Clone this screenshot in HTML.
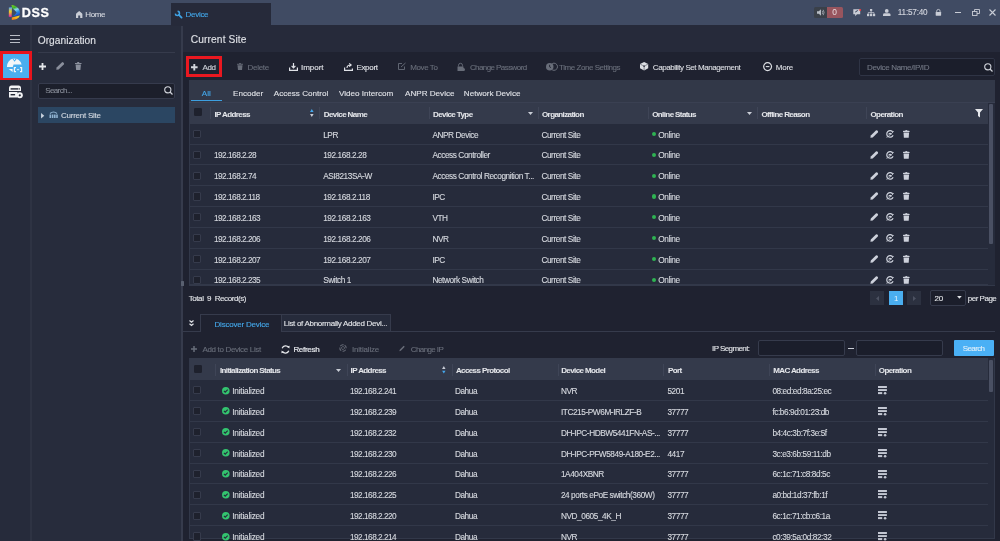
<!DOCTYPE html>
<html><head><meta charset="utf-8">
<style>
*{margin:0;padding:0;box-sizing:border-box}
html,body{width:1000px;height:541px;overflow:hidden;background:#1f2230;font-family:"Liberation Sans",sans-serif;color:#d8dbe2}
.a{position:absolute}
.t{position:absolute;white-space:nowrap;font-size:8px;line-height:10px;color:#d9dce3;-webkit-text-stroke:0.12px currentColor}
.b{font-weight:bold}
svg{position:absolute;overflow:visible}
#top{left:0;top:0;width:1000px;height:25.4px;background:#404b63}
#lbar{left:0;top:25.4px;width:30px;height:516px;background:#262b3b}
#ldiv{left:30px;top:25.4px;width:1.6px;height:516px;background:#2e3343}
#org{left:31.6px;top:25.4px;width:150px;height:516px;background:#272c3c}
#mdiv{left:181.4px;top:25.4px;width:1.8px;height:516px;background:#363b4c}
#mainhead{left:183.2px;top:25.4px;width:817px;height:27px;background:#262a3a}
.hl{position:absolute;height:1px;background:#353a4b}
.vl{position:absolute;width:1px;background:#3f4557}
.cb{position:absolute;width:8.2px;height:8.2px;background:#1e212d;border:0.9px solid #363b4c;border-radius:1px}
.row{position:absolute;height:20.83px;background:#262b3b;border-bottom:1px solid #323849}
.th{font-weight:bold;letter-spacing:-0.6px;color:#e4e6ea;-webkit-text-stroke:0.05px currentColor}
.td{letter-spacing:-0.42px;color:#d6d9df;font-size:8.25px;margin-left:-0.6px;margin-top:0.8px}
.dg{letter-spacing:-0.5px}
.dot{position:absolute;width:4.2px;height:4.2px;border-radius:50%;background:#2fb352}
.gray{color:#7d8290}
</style></head><body><div id="wrap" style="position:absolute;left:0;top:0;width:1000px;height:541px;overflow:hidden;will-change:transform">
<div id="top" class="a"></div>
<div id="lbar" class="a"></div>
<div id="ldiv" class="a"></div>
<div id="org" class="a"></div>
<div id="mdiv" class="a"></div>
<div id="mainhead" class="a"></div>

<!-- ===== TOP BAR ===== -->
<svg style="left:8px;top:4px" width="13" height="17" viewBox="0 0 13 17">
  <defs>
    <linearGradient id="lg1" x1="0" y1="0" x2="0.3" y2="1">
      <stop offset="0" stop-color="#7ee21c"/><stop offset="0.3" stop-color="#3fb02a"/><stop offset="0.5" stop-color="#8ad8f0"/><stop offset="0.75" stop-color="#2a8ae0"/><stop offset="1" stop-color="#1a50d0"/>
    </linearGradient>
    <linearGradient id="lg2" x1="1" y1="0" x2="0" y2="1">
      <stop offset="0" stop-color="#e8e030"/><stop offset="0.5" stop-color="#f8b020"/><stop offset="1" stop-color="#f86a10"/>
    </linearGradient>
    <linearGradient id="lg3" x1="0" y1="0" x2="0" y2="1">
      <stop offset="0" stop-color="#5aa8f5"/><stop offset="0.45" stop-color="#f0d020"/><stop offset="1" stop-color="#e020a8"/>
    </linearGradient>
  </defs>
  <path d="M3.5 1 C8 1.5 12 4.5 12 8.5 C12 9.8 11.7 10.6 11.2 11.2 L4 12.6 Q7.5 11 8.6 8.6 Q7 6 4.2 4.3 Z" fill="url(#lg1)"/>
  <path d="M3.8 13.4 L11.8 11.6 C11 14.5 8 15.8 3.8 16 Z" fill="url(#lg2)"/>
  <path d="M0.9 3.5 L4 3.3 L3.6 13 L0.8 12.8 Z" fill="url(#lg3)"/>
</svg>
<div class="t b" style="left:21.8px;top:7.1px;font-size:12.6px;line-height:12px;color:#fff;letter-spacing:0.65px;-webkit-text-stroke:0.3px #fff">DSS</div>

<svg style="left:75.8px;top:11px" width="6.4" height="7" viewBox="0 0 6.4 7"><path d="M0 7 V3.2 Q0 2.6 0.5 2.2 L3.2 0 L5.9 2.2 Q6.4 2.6 6.4 3.2 V7 H4.2 V4.6 H2.2 V7 Z" fill="#c9cdd6"/></svg>
<div class="t" style="left:85.3px;top:10px;color:#d3d6de;letter-spacing:-0.4px">Home</div>

<div class="a" style="left:171px;top:2.7px;width:99.8px;height:23px;background:#262a3a"></div>
<svg style="left:174.3px;top:10px" width="9" height="9" viewBox="0 0 9 9"><path d="M3.6 1.3 A2.1 2.1 0 1 1 1.3 3.6" stroke="#3fa3e6" stroke-width="1.5" fill="none"/><path d="M4.9 4.9 L7.6 7.6" stroke="#3fa3e6" stroke-width="1.8" stroke-linecap="round"/></svg>
<div class="t" style="left:185.6px;top:10.1px;color:#42a6e8;letter-spacing:-0.3px">Device</div>

<!-- alarm box -->
<div class="a" style="left:814.4px;top:6.8px;width:12.4px;height:11.3px;background:#3a4049;border-radius:1.5px 0 0 1.5px"></div>
<svg style="left:816.5px;top:8.8px" width="8" height="7" viewBox="0 0 8 7"><path d="M0 2.2 H1.8 L4 0.2 V6.8 L1.8 4.8 H0 Z" fill="#b7bcc4"/><path d="M5.2 1.8 Q6.3 3.5 5.2 5.2 M6.2 0.8 Q8 3.5 6.2 6.2" stroke="#b7bcc4" stroke-width="0.7" fill="none"/></svg>
<div class="a" style="left:826.8px;top:6.8px;width:16.7px;height:11.1px;background:#98555e;border-radius:0 1.5px 1.5px 0"></div>
<div class="t" style="left:832.2px;top:7.4px;color:#eadcdf;font-size:8.4px;-webkit-text-stroke:0">0</div>

<svg style="left:853px;top:9px" width="8" height="7.5" viewBox="0 0 8 7.5"><path d="M0.3 0.3 H7.2 V5.2 H4 L2.2 7.2 V5.2 H0.3 Z" fill="#c9cdd6"/><path d="M2 3.6 L2.3 2.6 L4.6 0.9 L5.2 1.5 L3 3.3 Z" fill="#404b63"/><circle cx="7.1" cy="0.9" r="1" fill="#e8383d"/></svg>
<svg style="left:866.8px;top:8.9px" width="8.2" height="7.2" viewBox="0 0 8 7"><rect x="2.9" y="0" width="2.2" height="1.9" fill="#c9cdd6"/><path d="M4 1.9 V3.6 M1.1 5 V3.6 H6.9 V5 M4 3.6 V5" stroke="#c9cdd6" stroke-width="0.8" fill="none"/><rect x="0" y="4.9" width="2.2" height="2.1" fill="#c9cdd6"/><rect x="2.9" y="4.9" width="2.2" height="2.1" fill="#c9cdd6"/><rect x="5.8" y="4.9" width="2.2" height="2.1" fill="#c9cdd6"/></svg>
<svg style="left:882.8px;top:8.9px" width="7.5" height="7" viewBox="0 0 7.5 7"><circle cx="3.75" cy="1.9" r="1.9" fill="#c9cdd6"/><path d="M0 5.4 Q0 4.2 1.8 4.2 H5.7 Q7.5 4.2 7.5 5.4 V7 H0 Z" fill="#c9cdd6"/></svg>
<div class="t" style="left:897.8px;top:8px;color:#d3d6de;letter-spacing:-0.2px;font-size:8.2px">11:57:40</div>
<svg style="left:934.5px;top:9.2px" width="6.8" height="6.8" viewBox="0 0 8 8"><path d="M2 3.5 V2.5 A2 2 0 0 1 6 2.5 V3.5" stroke="#c9cdd6" stroke-width="1" fill="none"/><rect x="0.8" y="3.5" width="6.4" height="4.5" rx="0.5" fill="#c9cdd6"/></svg>
<div class="a" style="left:954.5px;top:12.2px;width:6px;height:1px;background:#c9cdd6"></div>
<svg style="left:971.5px;top:9px" width="8" height="7" viewBox="0 0 8 7"><rect x="0.5" y="2.5" width="4.5" height="4" fill="none" stroke="#c9cdd6" stroke-width="0.9"/><path d="M2.5 2.5 V0.5 H7.5 V4.5 H5" fill="none" stroke="#c9cdd6" stroke-width="0.9"/></svg>
<svg style="left:989px;top:9px" width="7" height="7" viewBox="0 0 7 7"><path d="M0.5 0.5 L6.5 6.5 M6.5 0.5 L0.5 6.5" stroke="#c9cdd6" stroke-width="1.1"/></svg>

<!-- ===== LEFT BAR ===== -->
<div class="a" style="left:10px;top:35.2px;width:9.6px;height:1.2px;background:#b9bdc6"></div>
<div class="a" style="left:10px;top:38.5px;width:9.6px;height:1.2px;background:#b9bdc6"></div>
<div class="a" style="left:10px;top:41.8px;width:9.6px;height:1.2px;background:#b9bdc6"></div>
<div class="a" style="left:0;top:51px;width:31.9px;height:29px;background:#e8141c"></div>
<div class="a" style="left:3px;top:53.8px;width:26.2px;height:24.1px;background:#4aaeef"></div>
<svg style="left:6px;top:58px" width="17" height="15" viewBox="0 0 17 15">
  <path d="M0.9 9 A7.5 8.3 0 0 1 15.6 6.5 L7.6 6.5 L6.7 9 Z" fill="#f4f6f8"/>
  <path d="M6.2 0.4 H11 L8.6 3.8 Z" fill="#4aaeef"/>
  <circle cx="8.5" cy="1.3" r="0.65" fill="#f4f6f8"/>
  <path d="M2.7 11 H6.6 V14 Z" fill="#f4f6f8"/>
  <path d="M10 9.6 H8.4 V13.6 H10 M14 9.6 H15.6 V13.6 H14" stroke="#f4f6f8" stroke-width="1.2" fill="none"/>
  <path d="M10.9 11.7 H13.1" stroke="#f4f6f8" stroke-width="0.9"/>
</svg>
<svg style="left:8px;top:85px" width="15" height="14" viewBox="0 0 15 14">
  <path d="M1 3 Q1 0.5 3.5 0.5 H10.5 Q13 0.5 13 3 V6 H1 Z" fill="#f2f3f5"/>
  <rect x="2.6" y="3.2" width="7.5" height="1.4" fill="#222735"/><rect x="10.6" y="3.2" width="1.2" height="1.4" fill="#222735"/>
  <rect x="1" y="7" width="8.5" height="5.5" fill="#f2f3f5"/>
  <rect x="2.6" y="9" width="4.5" height="1.4" fill="#222735"/>
  <circle cx="11.8" cy="10.3" r="3" fill="#f2f3f5"/><circle cx="11.8" cy="10.3" r="1.1" fill="#222735"/>
</svg>

<!-- ===== ORG PANEL ===== -->
<div class="t" style="left:37.7px;top:34.5px;font-size:10.2px;line-height:12px;color:#dfe1e6;letter-spacing:0.05px">Organization</div>
<div class="hl" style="left:37.5px;top:52px;width:137.5px;background:#363b4c"></div>
<svg style="left:38.8px;top:63px" width="7" height="7" viewBox="0 0 7 7"><path d="M3.5 0 V7 M0 3.5 H7" stroke="#e6e8ec" stroke-width="1.8"/></svg>
<svg style="left:56px;top:62px" width="8.5" height="8" viewBox="0 0 8.5 8"><path d="M0.3 7.8 L0.6 5.6 L5.8 0.4 Q6.5 -0.2 7.3 0.5 L7.8 1 Q8.4 1.7 7.8 2.4 L2.6 7.5 Z" fill="#8a8f9c"/></svg>
<svg style="left:75px;top:62px" width="6.5" height="8" viewBox="0 0 6.5 8"><rect x="0" y="1" width="6.5" height="1" fill="#8a8f9c"/><rect x="2.2" y="0" width="2" height="1" fill="#8a8f9c"/><path d="M0.6 2.5 H5.9 L5.4 8 H1.1 Z" fill="#8a8f9c"/></svg>
<div class="a" style="left:37.6px;top:82.5px;width:137.6px;height:16px;background:#1c1f2b;border:1px solid #363b4d;border-radius:2px"></div>
<div class="t" style="left:45.2px;top:86px;color:#858a95;letter-spacing:-0.6px">Search...</div>
<svg style="left:164px;top:85.6px" width="9" height="9" viewBox="0 0 9 9"><circle cx="3.8" cy="3.8" r="3.1" stroke="#d0d3da" stroke-width="1.1" fill="none"/><path d="M6 6 L8.5 8.5" stroke="#d0d3da" stroke-width="1.3"/></svg>
<div class="a" style="left:37.5px;top:107px;width:137.5px;height:16.2px;background:#2b4662"></div>
<svg style="left:41px;top:112.6px" width="3.3" height="5.4" viewBox="0 0 3 5"><path d="M0 0 L3 2.5 L0 5 Z" fill="#c9d3de"/></svg>
<svg style="left:49px;top:111.3px" width="9" height="7" viewBox="0 0 9 7"><path d="M1 2.5 Q4.5 -0.5 8 2.5" stroke="#8fb2d0" stroke-width="1.1" fill="none"/><rect x="0.5" y="3.5" width="1.6" height="3.5" fill="#8fb2d0"/><rect x="2.8" y="3.5" width="1.6" height="3.5" fill="#8fb2d0"/><rect x="5" y="3.5" width="1.6" height="3.5" fill="#8fb2d0"/><rect x="7.2" y="3.5" width="1.6" height="3.5" fill="#8fb2d0"/></svg>
<div class="t" style="left:61px;top:111px;color:#d3d9e1;letter-spacing:-0.25px">Current Site</div>

<!-- ===== MAIN ===== -->
<div class="t" style="left:190.8px;top:34.3px;font-size:10.2px;line-height:12px;color:#dfe1e6;letter-spacing:0.12px">Current Site</div>
<div class="a" style="left:183.2px;top:52.8px;width:817px;height:489px;background:#1f2230"></div>
<div class="a" style="left:181px;top:281px;width:2.8px;height:5px;background:#596070;border-radius:0.5px"></div>
<div class="a" style="left:186px;top:56.1px;width:35.9px;height:20.9px;border:3.1px solid #ea1820;border-bottom-width:3.3px"></div>
<svg style="left:191px;top:63.5px" width="6.6" height="6.5" viewBox="0 0 6.6 6.5"><path d="M3.3 0 V6.5 M0 3.25 H6.6" stroke="#d3d6dd" stroke-width="1.9"/></svg>
<div class="t" style="left:202.6px;top:63.099999999999994px;color:#cfd2d9;letter-spacing:-0.4px">Add</div>
<svg style="left:237px;top:63.3px" width="6" height="7" viewBox="0 0 6 7"><rect x="0" y="0.8" width="6" height="0.9" fill="#686d79"/><rect x="2" y="0" width="2" height="0.8" fill="#686d79"/><path d="M0.5 2.2 H5.5 L5 7 H1 Z" fill="#686d79"/></svg>
<div class="t" style="left:247.4px;top:63.099999999999994px;color:#686d79;letter-spacing:-0.244px">Delete</div>
<svg style="left:288.6px;top:63.3px" width="9" height="8" viewBox="0 0 9 8"><path d="M4.5 0 V4.5 M2.6 2.8 L4.5 4.8 L6.4 2.8" stroke="#e0e2e7" stroke-width="1.2" fill="none"/><path d="M0.6 4.5 V7.4 H8.4 V4.5" stroke="#e0e2e7" stroke-width="1.2" fill="none"/></svg>
<div class="t" style="left:301.09999999999997px;top:63.099999999999994px;color:#e0e2e7;letter-spacing:-0.056px">Import</div>
<svg style="left:343.5px;top:63.3px" width="9" height="8" viewBox="0 0 9 8"><path d="M3 5 Q3 2 6.5 2 M5.2 0.3 L7.2 2 L5.2 3.7" stroke="#e0e2e7" stroke-width="1.1" fill="none"/><path d="M0.6 4.5 V7.4 H8.4 V5.5" stroke="#e0e2e7" stroke-width="1.2" fill="none"/></svg>
<div class="t" style="left:356.4px;top:63.099999999999994px;color:#e0e2e7;letter-spacing:-0.304px">Export</div>
<svg style="left:398px;top:63.3px" width="8" height="7" viewBox="0 0 8 7"><path d="M4 0.5 H0.5 V6.5 H6.5 V3.5" stroke="#686d79" stroke-width="0.9" fill="none"/><path d="M3 4 L7.5 0" stroke="#686d79" stroke-width="0.9"/></svg>
<div class="t" style="left:410.29999999999995px;top:63.099999999999994px;color:#686d79;letter-spacing:-0.413px">Move To</div>
<svg style="left:456.7px;top:63.3px" width="8" height="8" viewBox="0 0 8 8"><path d="M1.5 3.5 V2.3 A2 2 0 0 1 5.5 2.3 V3.5" stroke="#686d79" stroke-width="0.9" fill="none"/><rect x="0.5" y="3.5" width="6" height="4.5" fill="#686d79"/><circle cx="6.5" cy="6.5" r="1.5" fill="#686d79"/></svg>
<div class="t" style="left:469.9px;top:63.099999999999994px;color:#686d79;letter-spacing:-0.576px">Change Password</div>
<svg style="left:545.9px;top:62.9px" width="10.2" height="7.5" viewBox="0 0 10.2 7.5"><path d="M6.2 0.6 A3.6 3.6 0 1 1 6.2 6.9" stroke="#686d79" stroke-width="1" fill="none"/><circle cx="3.75" cy="3.75" r="3.75" fill="#686d79"/><path d="M3.6 1.8 V3.9 L5 4.6" stroke="#1f2230" stroke-width="0.9" fill="none"/></svg>
<div class="t" style="left:559.1px;top:63.099999999999994px;color:#686d79;letter-spacing:-0.452px">Time Zone Settings</div>
<svg style="left:640px;top:62.3px" width="8.2" height="8.4" viewBox="0 0 8.2 8.4"><path d="M4.1 0 L8.2 2.1 V6.3 L4.1 8.4 L0 6.3 V2.1 Z" fill="#dcdee3"/><path d="M2.6 3.4 H5.6 L4.1 5.4 Z" fill="#1f2230"/><path d="M2.7 3.4 L0.3 2.2 M5.5 3.4 L7.9 2.2 M4.1 5.3 V8.2" stroke="#1f2230" stroke-width="0.5"/></svg>
<div class="t" style="left:652.8px;top:63.099999999999994px;color:#dcdee3;letter-spacing:-0.428px">Capability Set Management</div>
<svg style="left:762.6px;top:62px" width="9.2" height="9.2" viewBox="0 0 9.2 9.2"><circle cx="4.6" cy="4.6" r="3.95" stroke="#dcdee3" stroke-width="1.2" fill="none"/><path d="M2.8 4.6 H6.4" stroke="#dcdee3" stroke-width="1.1"/></svg>
<div class="t" style="left:775.8px;top:63.099999999999994px;color:#dcdee3;letter-spacing:-0.247px">More</div>
<div class="a" style="left:859px;top:58px;width:135.5px;height:17.5px;background:#1b1e2b;border:1px solid #2f3445;border-radius:2px"></div>
<div class="t" style="left:867px;top:62.699999999999996px;color:#727784;letter-spacing:-0.35px">Device Name/IP/ID</div>
<svg style="left:983.5px;top:62.5px" width="9" height="9" viewBox="0 0 9 9"><circle cx="3.8" cy="3.8" r="3.1" stroke="#d0d3da" stroke-width="1.1" fill="none"/><path d="M6 6 L8.5 8.5" stroke="#d0d3da" stroke-width="1.3"/></svg>
<div class="a" style="left:188.8px;top:79.5px;width:806.2px;height:206.5px;background:#262b3b;border:1.2px solid #323849;border-top:none"></div>
<div class="a" style="left:188.8px;top:79.5px;width:806.2px;height:23.5px;background:#323848;border-bottom:1px solid #3a4052"></div>
<div class="t" style="left:201.8px;top:88.8px;color:#44a8ea;letter-spacing:0px;font-size:8.1px">All</div>
<div class="t" style="left:233px;top:88.8px;color:#dfe1e6;letter-spacing:0px;font-size:8.1px">Encoder</div>
<div class="t" style="left:273.8px;top:88.8px;color:#dfe1e6;letter-spacing:0px;font-size:8.1px">Access Control</div>
<div class="t" style="left:339px;top:88.8px;color:#dfe1e6;letter-spacing:0px;font-size:8.1px">Video Intercom</div>
<div class="t" style="left:405px;top:88.8px;color:#dfe1e6;letter-spacing:0px;font-size:8.1px">ANPR Device</div>
<div class="t" style="left:463.8px;top:88.8px;color:#dfe1e6;letter-spacing:0px;font-size:8.1px">Network Device</div>
<div class="a" style="left:190.6px;top:99.6px;width:31.5px;height:1.7px;background:#3d9fe0"></div>
<div class="a" style="left:189.6px;top:103px;width:798.4px;height:20.8px;background:#343a4b"></div>
<div class="cb" style="left:193.6px;top:108.3px;border-color:#1e212d"></div>
<div class="vl" style="left:210.4px;top:107px;height:12.2px"></div>
<div class="vl" style="left:319.2px;top:107px;height:12.2px"></div>
<div class="vl" style="left:428.8px;top:107px;height:12.2px"></div>
<div class="vl" style="left:538.2px;top:107px;height:12.2px"></div>
<div class="vl" style="left:648px;top:107px;height:12.2px"></div>
<div class="vl" style="left:757px;top:107px;height:12.2px"></div>
<div class="vl" style="left:866.3px;top:107px;height:12.2px"></div>
<div class="t th" style="left:214.5px;top:109.89999999999999px">IP Address</div>
<div class="t th" style="left:323.8px;top:109.89999999999999px">Device Name</div>
<div class="t th" style="left:433px;top:109.89999999999999px">Device Type</div>
<div class="t th" style="left:542px;top:109.89999999999999px">Organization</div>
<div class="t th" style="left:652.2px;top:109.89999999999999px">Online Status</div>
<div class="t th" style="left:761.4px;top:109.89999999999999px">Offline Reason</div>
<div class="t th" style="left:870.5px;top:109.89999999999999px">Operation</div>
<svg style="left:309.7px;top:109px" width="3.6" height="8" viewBox="0 0 3.6 8"><path d="M0 3.1 L1.8 0 L3.6 3.1 Z" fill="#44a8ee"/><path d="M0 4.9 L1.8 8 L3.6 4.9 Z" fill="#c8ccd6"/></svg>
<svg style="left:527.8px;top:112.3px" width="5" height="3" viewBox="0 0 5 3"><path d="M0 0 H5 L2.5 3 Z" fill="#c9cdd6"/></svg>
<svg style="left:746.8px;top:112.3px" width="5" height="3" viewBox="0 0 5 3"><path d="M0 0 H5 L2.5 3 Z" fill="#c9cdd6"/></svg>
<svg style="left:975.2px;top:109px" width="8" height="8.5" viewBox="0 0 8 8.5"><path d="M0 0 H8 L5 3.5 V8.5 L3 7 V3.5 Z" fill="#e6e8ec"/></svg>
<div class="a" style="left:988px;top:103px;width:6.8px;height:182px;background:#262b3b"></div>
<div class="a" style="left:988.9px;top:103.9px;width:4.2px;height:139.8px;background:#4a5063;border-radius:1px"></div>
<div class="a" style="left:189.6px;top:123.80px;width:798.4px;height:20.83px;background:#262b3b;border-bottom:1.2px solid #323849"></div>
<div class="cb" style="left:193.3px;top:129.90px"></div>
<div class="t td" style="left:323.8px;top:129.80px">LPR</div>
<div class="t td" style="left:433px;top:129.80px">ANPR Device</div>
<div class="t td" style="left:542px;top:129.80px">Current Site</div>
<div class="dot" style="left:651.6px;top:131.90px"></div>
<div class="t td" style="left:658.9px;top:129.80px">Online</div>
<svg style="left:869.6px;top:129.90px" width="8.5" height="8" viewBox="0 0 8.5 8"><path d="M0.4 7.7 L0.8 5.6 L5.9 0.5 Q6.6 -0.1 7.3 0.6 L7.8 1.1 Q8.4 1.8 7.8 2.5 L2.7 7.4 Z" fill="#cdd1db"/></svg>
<svg style="left:885.9px;top:129.90px" width="8.2" height="8" viewBox="0 0 8.2 8"><path d="M6.9 2.2 A3.3 3.3 0 1 0 7.1 5.2" stroke="#cdd1db" stroke-width="1.2" fill="none"/><path d="M2.3 4.6 A1.8 1.8 0 1 1 5.9 4.4 Z" fill="#cdd1db"/><path d="M0.3 7.3 Q3 7 7.8 1" stroke="#cdd1db" stroke-width="0.7" fill="none"/></svg>
<svg style="left:902.9px;top:129.90px" width="6.6" height="8" viewBox="0 0 6.6 8"><path d="M0 1.3 Q0 0.8 0.6 0.8 H2.1 Q2.3 0 3.3 0 Q4.3 0 4.5 0.8 H6 Q6.6 0.8 6.6 1.3 V1.9 H0 Z" fill="#cdd1db"/><path d="M0.5 2.5 H6.1 L5.7 7.8 H0.9 Z" fill="#cdd1db"/></svg>
<div class="a" style="left:189.6px;top:144.63px;width:798.4px;height:20.83px;background:#262b3b;border-bottom:1.2px solid #323849"></div>
<div class="cb" style="left:193.3px;top:150.73px"></div>
<div class="t td dg" style="left:214.5px;top:150.63px">192.168.2.28</div>
<div class="t td" style="left:323.8px;top:150.63px">192.168.2.28</div>
<div class="t td" style="left:433px;top:150.63px">Access Controller</div>
<div class="t td" style="left:542px;top:150.63px">Current Site</div>
<div class="dot" style="left:651.6px;top:152.73px"></div>
<div class="t td" style="left:658.9px;top:150.63px">Online</div>
<svg style="left:869.6px;top:150.73px" width="8.5" height="8" viewBox="0 0 8.5 8"><path d="M0.4 7.7 L0.8 5.6 L5.9 0.5 Q6.6 -0.1 7.3 0.6 L7.8 1.1 Q8.4 1.8 7.8 2.5 L2.7 7.4 Z" fill="#cdd1db"/></svg>
<svg style="left:885.9px;top:150.73px" width="8.2" height="8" viewBox="0 0 8.2 8"><path d="M6.9 2.2 A3.3 3.3 0 1 0 7.1 5.2" stroke="#cdd1db" stroke-width="1.2" fill="none"/><path d="M2.3 4.6 A1.8 1.8 0 1 1 5.9 4.4 Z" fill="#cdd1db"/><path d="M0.3 7.3 Q3 7 7.8 1" stroke="#cdd1db" stroke-width="0.7" fill="none"/></svg>
<svg style="left:902.9px;top:150.73px" width="6.6" height="8" viewBox="0 0 6.6 8"><path d="M0 1.3 Q0 0.8 0.6 0.8 H2.1 Q2.3 0 3.3 0 Q4.3 0 4.5 0.8 H6 Q6.6 0.8 6.6 1.3 V1.9 H0 Z" fill="#cdd1db"/><path d="M0.5 2.5 H6.1 L5.7 7.8 H0.9 Z" fill="#cdd1db"/></svg>
<div class="a" style="left:189.6px;top:165.46px;width:798.4px;height:20.83px;background:#262b3b;border-bottom:1.2px solid #323849"></div>
<div class="cb" style="left:193.3px;top:171.56px"></div>
<div class="t td dg" style="left:214.5px;top:171.46px">192.168.2.74</div>
<div class="t td" style="left:323.8px;top:171.46px">ASI8213SA-W</div>
<div class="t td" style="left:433px;top:171.46px">Access Control Recognition T...</div>
<div class="t td" style="left:542px;top:171.46px">Current Site</div>
<div class="dot" style="left:651.6px;top:173.56px"></div>
<div class="t td" style="left:658.9px;top:171.46px">Online</div>
<svg style="left:869.6px;top:171.56px" width="8.5" height="8" viewBox="0 0 8.5 8"><path d="M0.4 7.7 L0.8 5.6 L5.9 0.5 Q6.6 -0.1 7.3 0.6 L7.8 1.1 Q8.4 1.8 7.8 2.5 L2.7 7.4 Z" fill="#cdd1db"/></svg>
<svg style="left:885.9px;top:171.56px" width="8.2" height="8" viewBox="0 0 8.2 8"><path d="M6.9 2.2 A3.3 3.3 0 1 0 7.1 5.2" stroke="#cdd1db" stroke-width="1.2" fill="none"/><path d="M2.3 4.6 A1.8 1.8 0 1 1 5.9 4.4 Z" fill="#cdd1db"/><path d="M0.3 7.3 Q3 7 7.8 1" stroke="#cdd1db" stroke-width="0.7" fill="none"/></svg>
<svg style="left:902.9px;top:171.56px" width="6.6" height="8" viewBox="0 0 6.6 8"><path d="M0 1.3 Q0 0.8 0.6 0.8 H2.1 Q2.3 0 3.3 0 Q4.3 0 4.5 0.8 H6 Q6.6 0.8 6.6 1.3 V1.9 H0 Z" fill="#cdd1db"/><path d="M0.5 2.5 H6.1 L5.7 7.8 H0.9 Z" fill="#cdd1db"/></svg>
<div class="a" style="left:189.6px;top:186.29px;width:798.4px;height:20.83px;background:#262b3b;border-bottom:1.2px solid #323849"></div>
<div class="cb" style="left:193.3px;top:192.39px"></div>
<div class="t td dg" style="left:214.5px;top:192.29px">192.168.2.118</div>
<div class="t td" style="left:323.8px;top:192.29px">192.168.2.118</div>
<div class="t td" style="left:433px;top:192.29px">IPC</div>
<div class="t td" style="left:542px;top:192.29px">Current Site</div>
<div class="dot" style="left:651.6px;top:194.39px"></div>
<div class="t td" style="left:658.9px;top:192.29px">Online</div>
<svg style="left:869.6px;top:192.39px" width="8.5" height="8" viewBox="0 0 8.5 8"><path d="M0.4 7.7 L0.8 5.6 L5.9 0.5 Q6.6 -0.1 7.3 0.6 L7.8 1.1 Q8.4 1.8 7.8 2.5 L2.7 7.4 Z" fill="#cdd1db"/></svg>
<svg style="left:885.9px;top:192.39px" width="8.2" height="8" viewBox="0 0 8.2 8"><path d="M6.9 2.2 A3.3 3.3 0 1 0 7.1 5.2" stroke="#cdd1db" stroke-width="1.2" fill="none"/><path d="M2.3 4.6 A1.8 1.8 0 1 1 5.9 4.4 Z" fill="#cdd1db"/><path d="M0.3 7.3 Q3 7 7.8 1" stroke="#cdd1db" stroke-width="0.7" fill="none"/></svg>
<svg style="left:902.9px;top:192.39px" width="6.6" height="8" viewBox="0 0 6.6 8"><path d="M0 1.3 Q0 0.8 0.6 0.8 H2.1 Q2.3 0 3.3 0 Q4.3 0 4.5 0.8 H6 Q6.6 0.8 6.6 1.3 V1.9 H0 Z" fill="#cdd1db"/><path d="M0.5 2.5 H6.1 L5.7 7.8 H0.9 Z" fill="#cdd1db"/></svg>
<div class="a" style="left:189.6px;top:207.12px;width:798.4px;height:20.83px;background:#262b3b;border-bottom:1.2px solid #323849"></div>
<div class="cb" style="left:193.3px;top:213.22px"></div>
<div class="t td dg" style="left:214.5px;top:213.12px">192.168.2.163</div>
<div class="t td" style="left:323.8px;top:213.12px">192.168.2.163</div>
<div class="t td" style="left:433px;top:213.12px">VTH</div>
<div class="t td" style="left:542px;top:213.12px">Current Site</div>
<div class="dot" style="left:651.6px;top:215.22px"></div>
<div class="t td" style="left:658.9px;top:213.12px">Online</div>
<svg style="left:869.6px;top:213.22px" width="8.5" height="8" viewBox="0 0 8.5 8"><path d="M0.4 7.7 L0.8 5.6 L5.9 0.5 Q6.6 -0.1 7.3 0.6 L7.8 1.1 Q8.4 1.8 7.8 2.5 L2.7 7.4 Z" fill="#cdd1db"/></svg>
<svg style="left:885.9px;top:213.22px" width="8.2" height="8" viewBox="0 0 8.2 8"><path d="M6.9 2.2 A3.3 3.3 0 1 0 7.1 5.2" stroke="#cdd1db" stroke-width="1.2" fill="none"/><path d="M2.3 4.6 A1.8 1.8 0 1 1 5.9 4.4 Z" fill="#cdd1db"/><path d="M0.3 7.3 Q3 7 7.8 1" stroke="#cdd1db" stroke-width="0.7" fill="none"/></svg>
<svg style="left:902.9px;top:213.22px" width="6.6" height="8" viewBox="0 0 6.6 8"><path d="M0 1.3 Q0 0.8 0.6 0.8 H2.1 Q2.3 0 3.3 0 Q4.3 0 4.5 0.8 H6 Q6.6 0.8 6.6 1.3 V1.9 H0 Z" fill="#cdd1db"/><path d="M0.5 2.5 H6.1 L5.7 7.8 H0.9 Z" fill="#cdd1db"/></svg>
<div class="a" style="left:189.6px;top:227.95px;width:798.4px;height:20.83px;background:#262b3b;border-bottom:1.2px solid #323849"></div>
<div class="cb" style="left:193.3px;top:234.05px"></div>
<div class="t td dg" style="left:214.5px;top:233.95px">192.168.2.206</div>
<div class="t td" style="left:323.8px;top:233.95px">192.168.2.206</div>
<div class="t td" style="left:433px;top:233.95px">NVR</div>
<div class="t td" style="left:542px;top:233.95px">Current Site</div>
<div class="dot" style="left:651.6px;top:236.05px"></div>
<div class="t td" style="left:658.9px;top:233.95px">Online</div>
<svg style="left:869.6px;top:234.05px" width="8.5" height="8" viewBox="0 0 8.5 8"><path d="M0.4 7.7 L0.8 5.6 L5.9 0.5 Q6.6 -0.1 7.3 0.6 L7.8 1.1 Q8.4 1.8 7.8 2.5 L2.7 7.4 Z" fill="#cdd1db"/></svg>
<svg style="left:885.9px;top:234.05px" width="8.2" height="8" viewBox="0 0 8.2 8"><path d="M6.9 2.2 A3.3 3.3 0 1 0 7.1 5.2" stroke="#cdd1db" stroke-width="1.2" fill="none"/><path d="M2.3 4.6 A1.8 1.8 0 1 1 5.9 4.4 Z" fill="#cdd1db"/><path d="M0.3 7.3 Q3 7 7.8 1" stroke="#cdd1db" stroke-width="0.7" fill="none"/></svg>
<svg style="left:902.9px;top:234.05px" width="6.6" height="8" viewBox="0 0 6.6 8"><path d="M0 1.3 Q0 0.8 0.6 0.8 H2.1 Q2.3 0 3.3 0 Q4.3 0 4.5 0.8 H6 Q6.6 0.8 6.6 1.3 V1.9 H0 Z" fill="#cdd1db"/><path d="M0.5 2.5 H6.1 L5.7 7.8 H0.9 Z" fill="#cdd1db"/></svg>
<div class="a" style="left:189.6px;top:248.78px;width:798.4px;height:20.83px;background:#262b3b;border-bottom:1.2px solid #323849"></div>
<div class="cb" style="left:193.3px;top:254.88px"></div>
<div class="t td dg" style="left:214.5px;top:254.78px">192.168.2.207</div>
<div class="t td" style="left:323.8px;top:254.78px">192.168.2.207</div>
<div class="t td" style="left:433px;top:254.78px">IPC</div>
<div class="t td" style="left:542px;top:254.78px">Current Site</div>
<div class="dot" style="left:651.6px;top:256.88px"></div>
<div class="t td" style="left:658.9px;top:254.78px">Online</div>
<svg style="left:869.6px;top:254.88px" width="8.5" height="8" viewBox="0 0 8.5 8"><path d="M0.4 7.7 L0.8 5.6 L5.9 0.5 Q6.6 -0.1 7.3 0.6 L7.8 1.1 Q8.4 1.8 7.8 2.5 L2.7 7.4 Z" fill="#cdd1db"/></svg>
<svg style="left:885.9px;top:254.88px" width="8.2" height="8" viewBox="0 0 8.2 8"><path d="M6.9 2.2 A3.3 3.3 0 1 0 7.1 5.2" stroke="#cdd1db" stroke-width="1.2" fill="none"/><path d="M2.3 4.6 A1.8 1.8 0 1 1 5.9 4.4 Z" fill="#cdd1db"/><path d="M0.3 7.3 Q3 7 7.8 1" stroke="#cdd1db" stroke-width="0.7" fill="none"/></svg>
<svg style="left:902.9px;top:254.88px" width="6.6" height="8" viewBox="0 0 6.6 8"><path d="M0 1.3 Q0 0.8 0.6 0.8 H2.1 Q2.3 0 3.3 0 Q4.3 0 4.5 0.8 H6 Q6.6 0.8 6.6 1.3 V1.9 H0 Z" fill="#cdd1db"/><path d="M0.5 2.5 H6.1 L5.7 7.8 H0.9 Z" fill="#cdd1db"/></svg>
<div class="a" style="left:189.6px;top:269.61px;width:798.4px;height:15.89px;background:#262b3b;border-bottom:1.2px solid #323849"></div>
<div class="cb" style="left:193.3px;top:275.71px"></div>
<div class="t td dg" style="left:214.5px;top:275.61px">192.168.2.235</div>
<div class="t td" style="left:323.8px;top:275.61px">Switch 1</div>
<div class="t td" style="left:433px;top:275.61px">Network Switch</div>
<div class="t td" style="left:542px;top:275.61px">Current Site</div>
<div class="dot" style="left:651.6px;top:277.71px"></div>
<div class="t td" style="left:658.9px;top:275.61px">Online</div>
<svg style="left:869.6px;top:275.71px" width="8.5" height="8" viewBox="0 0 8.5 8"><path d="M0.4 7.7 L0.8 5.6 L5.9 0.5 Q6.6 -0.1 7.3 0.6 L7.8 1.1 Q8.4 1.8 7.8 2.5 L2.7 7.4 Z" fill="#cdd1db"/></svg>
<svg style="left:885.9px;top:275.71px" width="8.2" height="8" viewBox="0 0 8.2 8"><path d="M6.9 2.2 A3.3 3.3 0 1 0 7.1 5.2" stroke="#cdd1db" stroke-width="1.2" fill="none"/><path d="M2.3 4.6 A1.8 1.8 0 1 1 5.9 4.4 Z" fill="#cdd1db"/><path d="M0.3 7.3 Q3 7 7.8 1" stroke="#cdd1db" stroke-width="0.7" fill="none"/></svg>
<svg style="left:902.9px;top:275.71px" width="6.6" height="8" viewBox="0 0 6.6 8"><path d="M0 1.3 Q0 0.8 0.6 0.8 H2.1 Q2.3 0 3.3 0 Q4.3 0 4.5 0.8 H6 Q6.6 0.8 6.6 1.3 V1.9 H0 Z" fill="#cdd1db"/><path d="M0.5 2.5 H6.1 L5.7 7.8 H0.9 Z" fill="#cdd1db"/></svg>
<div class="t" style="left:188.7px;top:293.5px;color:#e2e4e8;letter-spacing:-0.42px">Total&nbsp; 9&nbsp; Record(s)</div>
<div class="a" style="left:870px;top:291px;width:14px;height:14px;background:#2c3140"></div>
<svg style="left:875.5px;top:295.5px" width="3" height="5" viewBox="0 0 3 5"><path d="M3 0 L0 2.5 L3 5 Z" fill="#4d5262"/></svg>
<div class="a" style="left:889px;top:291px;width:14px;height:14px;background:#4aaeef"></div>
<div class="t" style="left:894px;top:293.8px;color:#e6f2fb;font-size:7.8px;-webkit-text-stroke:0">1</div>
<div class="a" style="left:907px;top:291px;width:14px;height:14px;background:#2c3140"></div>
<svg style="left:912.5px;top:295.5px" width="3" height="5" viewBox="0 0 3 5"><path d="M0 0 L3 2.5 L0 5 Z" fill="#4d5262"/></svg>
<div class="a" style="left:930px;top:289.5px;width:35.5px;height:16px;background:#1b1e2b;border:1px solid #363b4c;border-radius:2px"></div>
<div class="t" style="left:934.5px;top:293.8px;color:#e2e4e8;letter-spacing:-0.2px">20</div>
<svg style="left:957.2px;top:296.4px" width="4.8" height="2.8" viewBox="0 0 5 3"><path d="M0 0 H5 L2.5 3 Z" fill="#e2e4e8"/></svg>
<div class="t" style="left:967.7px;top:294.2px;color:#e2e4e8;letter-spacing:-0.48px">per Page</div>
<div class="hl" style="left:183.4px;top:330.6px;width:811.6px;background:#363b4c"></div>
<svg style="left:189.4px;top:320px" width="5" height="6.5" viewBox="0 0 5 6.5"><path d="M0.5 0.5 L2.5 2.2 L4.5 0.5 M0.5 3.8 L2.5 5.5 L4.5 3.8" stroke="#e0e3e8" stroke-width="1.2" fill="none"/></svg>
<div class="a" style="left:200.2px;top:314.3px;width:81px;height:17.3px;background:#1f2230;border-top:1px solid #363b4c;border-left:1px solid #363b4c"></div>
<div class="t" style="left:214.5px;top:319.6px;color:#44a8ea;letter-spacing:-0.2px">Discover Device</div>
<div class="a" style="left:281px;top:314.3px;width:110px;height:16.6px;background:#262b3b;border:1px solid #363b4c;border-bottom:none"></div>
<div class="t" style="left:283.8px;top:319.2px;color:#e2e4e8;letter-spacing:-0.3px">List of Abnormally Added Devi...</div>
<svg style="left:191px;top:345.5px" width="6" height="6" viewBox="0 0 6 6"><path d="M3 0 V6 M0 3 H6" stroke="#686d79" stroke-width="1.5"/></svg>
<div class="t" style="left:202.4px;top:344.6px;color:#686d79;letter-spacing:-0.33px">Add to Device List</div>
<svg style="left:280.8px;top:344.5px" width="9" height="9" viewBox="0 0 9 9"><path d="M7.6 2.6 A3.6 3.6 0 0 0 1.2 3.2 M1.4 6.4 A3.6 3.6 0 0 0 7.8 5.8" stroke="#e6e8ec" stroke-width="1.3" fill="none"/><path d="M6.2 1.6 L8.4 3.6 L8.6 0.8 Z M2.8 7.4 L0.6 5.4 L0.4 8.2 Z" fill="#e6e8ec"/></svg>
<div class="t" style="left:293.4px;top:344.6px;color:#e2e4e9;letter-spacing:-0.3px;-webkit-text-stroke:0.22px currentColor">Refresh</div>
<svg style="left:339.4px;top:344px" width="8" height="8" viewBox="0 0 8 8"><circle cx="4" cy="4" r="3.2" stroke="#686d79" stroke-width="1" fill="none" stroke-dasharray="3.5 1.5" transform="rotate(-60 4 4)"/><path d="M4 2.2 L5.8 4 L4 5.8 L2.2 4 Z" fill="none" stroke="#686d79" stroke-width="0.8"/></svg>
<div class="t" style="left:351.9px;top:344.6px;color:#686d79;letter-spacing:-0.17px">Initialize</div>
<svg style="left:399px;top:345px" width="6.5" height="6.5" viewBox="0 0 7 7"><path d="M0.3 6.7 L0.8 5 L5 0.8 L6.2 2 L2 6.2 Z" fill="#686d79"/></svg>
<div class="t" style="left:410.8px;top:344.6px;color:#686d79;letter-spacing:-0.6px">Change IP</div>
<div class="t" style="left:712px;top:344.6px;color:#e2e4e8;letter-spacing:-0.58px;margin-top:-0.8px">IP Segment:</div>
<div class="a" style="left:758px;top:340px;width:86.8px;height:16.4px;background:#1b1e2b;border:1px solid #363b4c;border-radius:2px"></div>
<div class="a" style="left:848px;top:348px;width:5.5px;height:1px;background:#c9cdd6"></div>
<div class="a" style="left:856px;top:340px;width:86.8px;height:16.4px;background:#1b1e2b;border:1px solid #363b4c;border-radius:2px"></div>
<div class="a" style="left:953.6px;top:340px;width:40.6px;height:16.3px;background:#4ab0f5;border-radius:1px"></div>
<div class="t" style="left:962.8px;top:344.3px;color:#dceefa;letter-spacing:-0.62px">Search</div>
<div class="a" style="left:188.8px;top:358.2px;width:806.2px;height:181.2px;background:#262b3b;border:1.2px solid #323849;border-top:none"></div>
<div class="a" style="left:189.6px;top:358.2px;width:798.4px;height:21.5px;background:#343a4b"></div>
<div class="cb" style="left:193.6px;top:364.5px;border-color:#1e212d"></div>
<div class="vl" style="left:215.2px;top:364px;height:12px"></div>
<div class="vl" style="left:346.5px;top:364px;height:12px"></div>
<div class="vl" style="left:452.3px;top:364px;height:12px"></div>
<div class="vl" style="left:557.5px;top:364px;height:12px"></div>
<div class="vl" style="left:663px;top:364px;height:12px"></div>
<div class="vl" style="left:768.6px;top:364px;height:12px"></div>
<div class="vl" style="left:874.6px;top:364px;height:12px"></div>
<div class="t th" style="left:219.9px;top:366.1px">Initialization Status</div>
<div class="t th" style="left:350.6px;top:366.1px">IP Address</div>
<div class="t th" style="left:455.9px;top:366.1px">Access Protocol</div>
<div class="t th" style="left:561.2px;top:366.1px">Device Model</div>
<div class="t th" style="left:668px;top:366.1px">Port</div>
<div class="t th" style="left:773.2px;top:366.1px">MAC Address</div>
<div class="t th" style="left:878.8px;top:366.1px">Operation</div>
<svg style="left:335.5px;top:368.5px" width="5" height="3" viewBox="0 0 5 3"><path d="M0 0 H5 L2.5 3 Z" fill="#c9cdd6"/></svg>
<svg style="left:441.8px;top:365.6px" width="3.6" height="7.6" viewBox="0 0 3.6 8"><path d="M0 3.1 L1.8 0 L3.6 3.1 Z" fill="#c8ccd6"/><path d="M0 4.9 L1.8 8 L3.6 4.9 Z" fill="#44a8ee"/></svg>
<div class="a" style="left:988px;top:358.2px;width:5.8px;height:180px;background:#262b3b"></div>
<div class="a" style="left:988.7px;top:360px;width:4.2px;height:31.6px;background:#4a5063;border-radius:1px"></div>
<div class="a" style="left:189.6px;top:380.10px;width:798.4px;height:20.87px;background:#262b3b;border-bottom:1.2px solid #323849;"></div>
<div class="cb" style="left:193.3px;top:386.30px"></div>
<svg style="left:222px;top:386.60px" width="7.6" height="7.6" viewBox="0 0 8 8"><circle cx="4" cy="4" r="4" fill="#33c46f"/><path d="M2 4.1 L3.4 5.5 L6 2.8" stroke="#262b3b" stroke-width="1.2" fill="none"/></svg>
<div class="t td" style="left:232.8px;top:386.20px;letter-spacing:-0.2px">Initialized</div>
<div class="t td dg" style="left:350.5px;top:386.20px">192.168.2.241</div>
<div class="t td" style="left:455.5px;top:386.20px">Dahua</div>
<div class="t td" style="left:561.5px;top:386.20px">NVR</div>
<div class="t td" style="left:668px;top:386.20px">5201</div>
<div class="t td" style="left:773px;top:386.20px">08:ed:ed:8a:25:ec</div>
<svg style="left:878px;top:386.10px" width="9" height="9" viewBox="0 0 9 9"><rect x="0" y="0" width="8.9" height="2" fill="#c3c7d2"/><rect x="0" y="3.1" width="8.9" height="1.9" fill="#c3c7d2"/><rect x="0" y="6.1" width="4.2" height="2" fill="#c3c7d2"/><circle cx="7.1" cy="7.2" r="1.3" fill="#c3c7d2"/></svg>
<div class="a" style="left:189.6px;top:400.97px;width:798.4px;height:20.87px;background:#262b3b;border-bottom:1.2px solid #323849;"></div>
<div class="cb" style="left:193.3px;top:407.17px"></div>
<svg style="left:222px;top:407.47px" width="7.6" height="7.6" viewBox="0 0 8 8"><circle cx="4" cy="4" r="4" fill="#33c46f"/><path d="M2 4.1 L3.4 5.5 L6 2.8" stroke="#262b3b" stroke-width="1.2" fill="none"/></svg>
<div class="t td" style="left:232.8px;top:407.07px;letter-spacing:-0.2px">Initialized</div>
<div class="t td dg" style="left:350.5px;top:407.07px">192.168.2.239</div>
<div class="t td" style="left:455.5px;top:407.07px">Dahua</div>
<div class="t td" style="left:561.5px;top:407.07px">ITC215-PW6M-IRLZF-B</div>
<div class="t td" style="left:668px;top:407.07px">37777</div>
<div class="t td" style="left:773px;top:407.07px">fc:b6:9d:01:23:db</div>
<svg style="left:878px;top:406.97px" width="9" height="9" viewBox="0 0 9 9"><rect x="0" y="0" width="8.9" height="2" fill="#c3c7d2"/><rect x="0" y="3.1" width="8.9" height="1.9" fill="#c3c7d2"/><rect x="0" y="6.1" width="4.2" height="2" fill="#c3c7d2"/><circle cx="7.1" cy="7.2" r="1.3" fill="#c3c7d2"/></svg>
<div class="a" style="left:189.6px;top:421.84px;width:798.4px;height:20.87px;background:#262b3b;border-bottom:1.2px solid #323849;"></div>
<div class="cb" style="left:193.3px;top:428.04px"></div>
<svg style="left:222px;top:428.34px" width="7.6" height="7.6" viewBox="0 0 8 8"><circle cx="4" cy="4" r="4" fill="#33c46f"/><path d="M2 4.1 L3.4 5.5 L6 2.8" stroke="#262b3b" stroke-width="1.2" fill="none"/></svg>
<div class="t td" style="left:232.8px;top:427.94px;letter-spacing:-0.2px">Initialized</div>
<div class="t td dg" style="left:350.5px;top:427.94px">192.168.2.232</div>
<div class="t td" style="left:455.5px;top:427.94px">Dahua</div>
<div class="t td" style="left:561.5px;top:427.94px">DH-IPC-HDBW5441FN-AS-...</div>
<div class="t td" style="left:668px;top:427.94px">37777</div>
<div class="t td" style="left:773px;top:427.94px">b4:4c:3b:7f:3e:5f</div>
<svg style="left:878px;top:427.84px" width="9" height="9" viewBox="0 0 9 9"><rect x="0" y="0" width="8.9" height="2" fill="#c3c7d2"/><rect x="0" y="3.1" width="8.9" height="1.9" fill="#c3c7d2"/><rect x="0" y="6.1" width="4.2" height="2" fill="#c3c7d2"/><circle cx="7.1" cy="7.2" r="1.3" fill="#c3c7d2"/></svg>
<div class="a" style="left:189.6px;top:442.71px;width:798.4px;height:20.87px;background:#262b3b;border-bottom:1.2px solid #323849;"></div>
<div class="cb" style="left:193.3px;top:448.91px"></div>
<svg style="left:222px;top:449.21px" width="7.6" height="7.6" viewBox="0 0 8 8"><circle cx="4" cy="4" r="4" fill="#33c46f"/><path d="M2 4.1 L3.4 5.5 L6 2.8" stroke="#262b3b" stroke-width="1.2" fill="none"/></svg>
<div class="t td" style="left:232.8px;top:448.81px;letter-spacing:-0.2px">Initialized</div>
<div class="t td dg" style="left:350.5px;top:448.81px">192.168.2.230</div>
<div class="t td" style="left:455.5px;top:448.81px">Dahua</div>
<div class="t td" style="left:561.5px;top:448.81px">DH-IPC-PFW5849-A180-E2...</div>
<div class="t td" style="left:668px;top:448.81px">4417</div>
<div class="t td" style="left:773px;top:448.81px">3c:e3:6b:59:11:db</div>
<svg style="left:878px;top:448.71px" width="9" height="9" viewBox="0 0 9 9"><rect x="0" y="0" width="8.9" height="2" fill="#c3c7d2"/><rect x="0" y="3.1" width="8.9" height="1.9" fill="#c3c7d2"/><rect x="0" y="6.1" width="4.2" height="2" fill="#c3c7d2"/><circle cx="7.1" cy="7.2" r="1.3" fill="#c3c7d2"/></svg>
<div class="a" style="left:189.6px;top:463.58px;width:798.4px;height:20.87px;background:#262b3b;border-bottom:1.2px solid #323849;"></div>
<div class="cb" style="left:193.3px;top:469.78px"></div>
<svg style="left:222px;top:470.08px" width="7.6" height="7.6" viewBox="0 0 8 8"><circle cx="4" cy="4" r="4" fill="#33c46f"/><path d="M2 4.1 L3.4 5.5 L6 2.8" stroke="#262b3b" stroke-width="1.2" fill="none"/></svg>
<div class="t td" style="left:232.8px;top:469.68px;letter-spacing:-0.2px">Initialized</div>
<div class="t td dg" style="left:350.5px;top:469.68px">192.168.2.226</div>
<div class="t td" style="left:455.5px;top:469.68px">Dahua</div>
<div class="t td" style="left:561.5px;top:469.68px">1A404XBNR</div>
<div class="t td" style="left:668px;top:469.68px">37777</div>
<div class="t td" style="left:773px;top:469.68px">6c:1c:71:c8:8d:5c</div>
<svg style="left:878px;top:469.58px" width="9" height="9" viewBox="0 0 9 9"><rect x="0" y="0" width="8.9" height="2" fill="#c3c7d2"/><rect x="0" y="3.1" width="8.9" height="1.9" fill="#c3c7d2"/><rect x="0" y="6.1" width="4.2" height="2" fill="#c3c7d2"/><circle cx="7.1" cy="7.2" r="1.3" fill="#c3c7d2"/></svg>
<div class="a" style="left:189.6px;top:484.45px;width:798.4px;height:20.87px;background:#262b3b;border-bottom:1.2px solid #323849;"></div>
<div class="cb" style="left:193.3px;top:490.65px"></div>
<svg style="left:222px;top:490.95px" width="7.6" height="7.6" viewBox="0 0 8 8"><circle cx="4" cy="4" r="4" fill="#33c46f"/><path d="M2 4.1 L3.4 5.5 L6 2.8" stroke="#262b3b" stroke-width="1.2" fill="none"/></svg>
<div class="t td" style="left:232.8px;top:490.55px;letter-spacing:-0.2px">Initialized</div>
<div class="t td dg" style="left:350.5px;top:490.55px">192.168.2.225</div>
<div class="t td" style="left:455.5px;top:490.55px">Dahua</div>
<div class="t td" style="left:561.5px;top:490.55px">24 ports ePoE switch(360W)</div>
<div class="t td" style="left:668px;top:490.55px">37777</div>
<div class="t td" style="left:773px;top:490.55px">a0:bd:1d:37:fb:1f</div>
<svg style="left:878px;top:490.45px" width="9" height="9" viewBox="0 0 9 9"><rect x="0" y="0" width="8.9" height="2" fill="#c3c7d2"/><rect x="0" y="3.1" width="8.9" height="1.9" fill="#c3c7d2"/><rect x="0" y="6.1" width="4.2" height="2" fill="#c3c7d2"/><circle cx="7.1" cy="7.2" r="1.3" fill="#c3c7d2"/></svg>
<div class="a" style="left:189.6px;top:505.32px;width:798.4px;height:20.87px;background:#262b3b;border-bottom:1.2px solid #323849;"></div>
<div class="cb" style="left:193.3px;top:511.52px"></div>
<svg style="left:222px;top:511.82px" width="7.6" height="7.6" viewBox="0 0 8 8"><circle cx="4" cy="4" r="4" fill="#33c46f"/><path d="M2 4.1 L3.4 5.5 L6 2.8" stroke="#262b3b" stroke-width="1.2" fill="none"/></svg>
<div class="t td" style="left:232.8px;top:511.42px;letter-spacing:-0.2px">Initialized</div>
<div class="t td dg" style="left:350.5px;top:511.42px">192.168.2.220</div>
<div class="t td" style="left:455.5px;top:511.42px">Dahua</div>
<div class="t td" style="left:561.5px;top:511.42px">NVD_0605_4K_H</div>
<div class="t td" style="left:668px;top:511.42px">37777</div>
<div class="t td" style="left:773px;top:511.42px">6c:1c:71:cb:c6:1a</div>
<svg style="left:878px;top:511.32px" width="9" height="9" viewBox="0 0 9 9"><rect x="0" y="0" width="8.9" height="2" fill="#c3c7d2"/><rect x="0" y="3.1" width="8.9" height="1.9" fill="#c3c7d2"/><rect x="0" y="6.1" width="4.2" height="2" fill="#c3c7d2"/><circle cx="7.1" cy="7.2" r="1.3" fill="#c3c7d2"/></svg>
<div class="a" style="left:189.6px;top:526.19px;width:798.4px;height:12.01px;background:#262b3b;border-bottom:1.2px solid #323849;border-bottom:none;"></div>
<div class="cb" style="left:193.3px;top:532.39px"></div>
<svg style="left:222px;top:532.69px" width="7.6" height="7.6" viewBox="0 0 8 8"><circle cx="4" cy="4" r="4" fill="#33c46f"/><path d="M2 4.1 L3.4 5.5 L6 2.8" stroke="#262b3b" stroke-width="1.2" fill="none"/></svg>
<div class="t td" style="left:232.8px;top:532.29px;letter-spacing:-0.2px">Initialized</div>
<div class="t td dg" style="left:350.5px;top:532.29px">192.168.2.214</div>
<div class="t td" style="left:455.5px;top:532.29px">Dahua</div>
<div class="t td" style="left:561.5px;top:532.29px">NVR</div>
<div class="t td" style="left:668px;top:532.29px">37777</div>
<div class="t td" style="left:773px;top:532.29px">c0:39:5a:0d:82:32</div>
<svg style="left:878px;top:532.19px" width="9" height="9" viewBox="0 0 9 9"><rect x="0" y="0" width="8.9" height="2" fill="#c3c7d2"/><rect x="0" y="3.1" width="8.9" height="1.9" fill="#c3c7d2"/><rect x="0" y="6.1" width="4.2" height="2" fill="#c3c7d2"/><circle cx="7.1" cy="7.2" r="1.3" fill="#c3c7d2"/></svg>
</div></body></html>
